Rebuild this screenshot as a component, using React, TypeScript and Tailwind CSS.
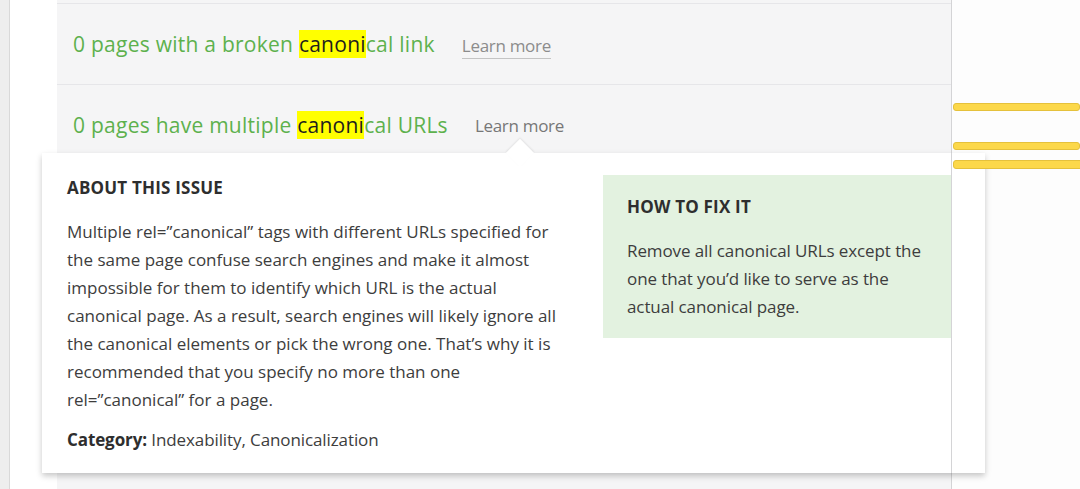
import React from "react";

const font = { fontFamily: '"Open Sans", "Noto Sans", sans-serif' };

interface Issue {
  before: string;
  mark: string;
  after: string;
  hovered: boolean;
}

const issues: Issue[] = [
  { before: "0 pages with a broken ", mark: "canoni", after: "cal link", hovered: false },
  { before: "0 pages have multiple ", mark: "canoni", after: "cal URLs", hovered: true },
];

const aboutLines = [
  "Multiple rel=\u201dcanonical\u201d tags with different URLs specified for",
  "the same page confuse search engines and make it almost",
  "impossible for them to identify which URL is the actual",
  "canonical page. As a result, search engines will likely ignore all",
  "the canonical elements or pick the wrong one. That\u2019s why it is",
  "recommended that you specify no more than one",
  "rel=\u201dcanonical\u201d for a page.",
];

const fixLines = [
  "Remove all canonical URLs except the",
  "one that you\u2019d like to serve as the",
  "actual canonical page.",
];

export default function App() {
  return (
    <div className="relative w-[1080px] h-[489px] overflow-hidden bg-white flex" style={font}>
      {/* left gutter */}
      <div className="w-[10px] bg-[#eeeeee] border-r border-[#d9d9d9]" />
      <div className="w-[47px] bg-white" />

      {/* issue list */}
      <div className="w-[895px] bg-[#f5f5f6] border-r border-[#d4d4d6] pt-[3px] flex flex-col">
        {issues.map((issue, i) => (
          <div
            key={i}
            className="h-[81px] border-t border-[#e6e6e9] flex items-center pl-[16px] pt-[2px]"
          >
            <span className="text-[21px] text-[#5db14d] tracking-[0.25px]">
              {issue.before}
              <span className="bg-[#ffff00] text-[#1e1e1e]">{issue.mark}</span>
              {issue.after}
            </span>
            {issue.hovered ? (
              <span className="ml-[27px] text-[17px] text-[#777777] tracking-[-0.3px]">Learn more</span>
            ) : (
              <span className="ml-[27px] mt-[3px] text-[17px] text-[#8c8c8c] tracking-[-0.3px] border-b border-[#c4c4c4] leading-[24px]">
                Learn more
              </span>
            )}
          </div>
        ))}
      </div>

      {/* right side */}
      <div className="flex-1 bg-[#fdfdfd] flex flex-col pt-[103px]">
        <div className="ml-[1px] h-[8px] rounded-[3px] bg-[#fcd84a] border border-[#e5c13c]" />
        <div className="ml-[1px] mt-[31px] h-[8px] rounded-[3px] bg-[#fcd84a] border border-[#e5c13c]" />
      </div>

      {/* popup */}
      <div className="absolute left-[42px] top-[153px] w-[943px] h-[320px] bg-white shadow-[0_3px_6px_rgba(0,0,0,0.22)] flex">
        <div className="absolute left-[468px] -top-[10px] w-[20px] h-[20px] bg-white rotate-45 shadow-[-1px_-1px_2px_rgba(0,0,0,0.08)]" />
        <div className="relative w-[910px] border-r border-[#d4d4d6] flex pl-[25px] pt-[25px] text-[#3d3d3d]">
          <div className="w-[536px] flex flex-col">
            <div className="text-[17px] leading-[20px] font-bold text-[#2e2e2e] tracking-[0.2px]">ABOUT THIS ISSUE</div>
            <div className="mt-[20px] text-[17px] leading-[28px]">
              {aboutLines.map((l, i) => (
                <div key={i} className="whitespace-nowrap">{l}</div>
              ))}
            </div>
            <div className="mt-[12px] text-[17px] leading-[28px] tracking-[-0.1px] whitespace-nowrap">
              <span className="font-bold text-[#2e2e2e]">Category:</span> Indexability, Canonicalization
            </div>
          </div>
          <div className="mt-[-3px] w-[348px] h-[163px] bg-[#e3f2e0] pl-[24px] pt-[22px]">
            <div className="text-[17px] leading-[20px] font-bold text-[#2e2e2e] tracking-[0.2px]">HOW TO FIX IT</div>
            <div className="mt-[20px] text-[17px] leading-[28px] tracking-[-0.1px]">
              {fixLines.map((l, i) => (
                <div key={i} className="whitespace-nowrap">{l}</div>
              ))}
            </div>
          </div>
        </div>
        <div className="flex-1 bg-white" />
      </div>

      {/* third marker bar lies over the popup edge */}
      <div className="absolute left-[953px] top-[160px] w-[130px] h-[9px] rounded-[3px] bg-[#fcd84a] border border-[#e5c13c]" />
    </div>
  );
}
